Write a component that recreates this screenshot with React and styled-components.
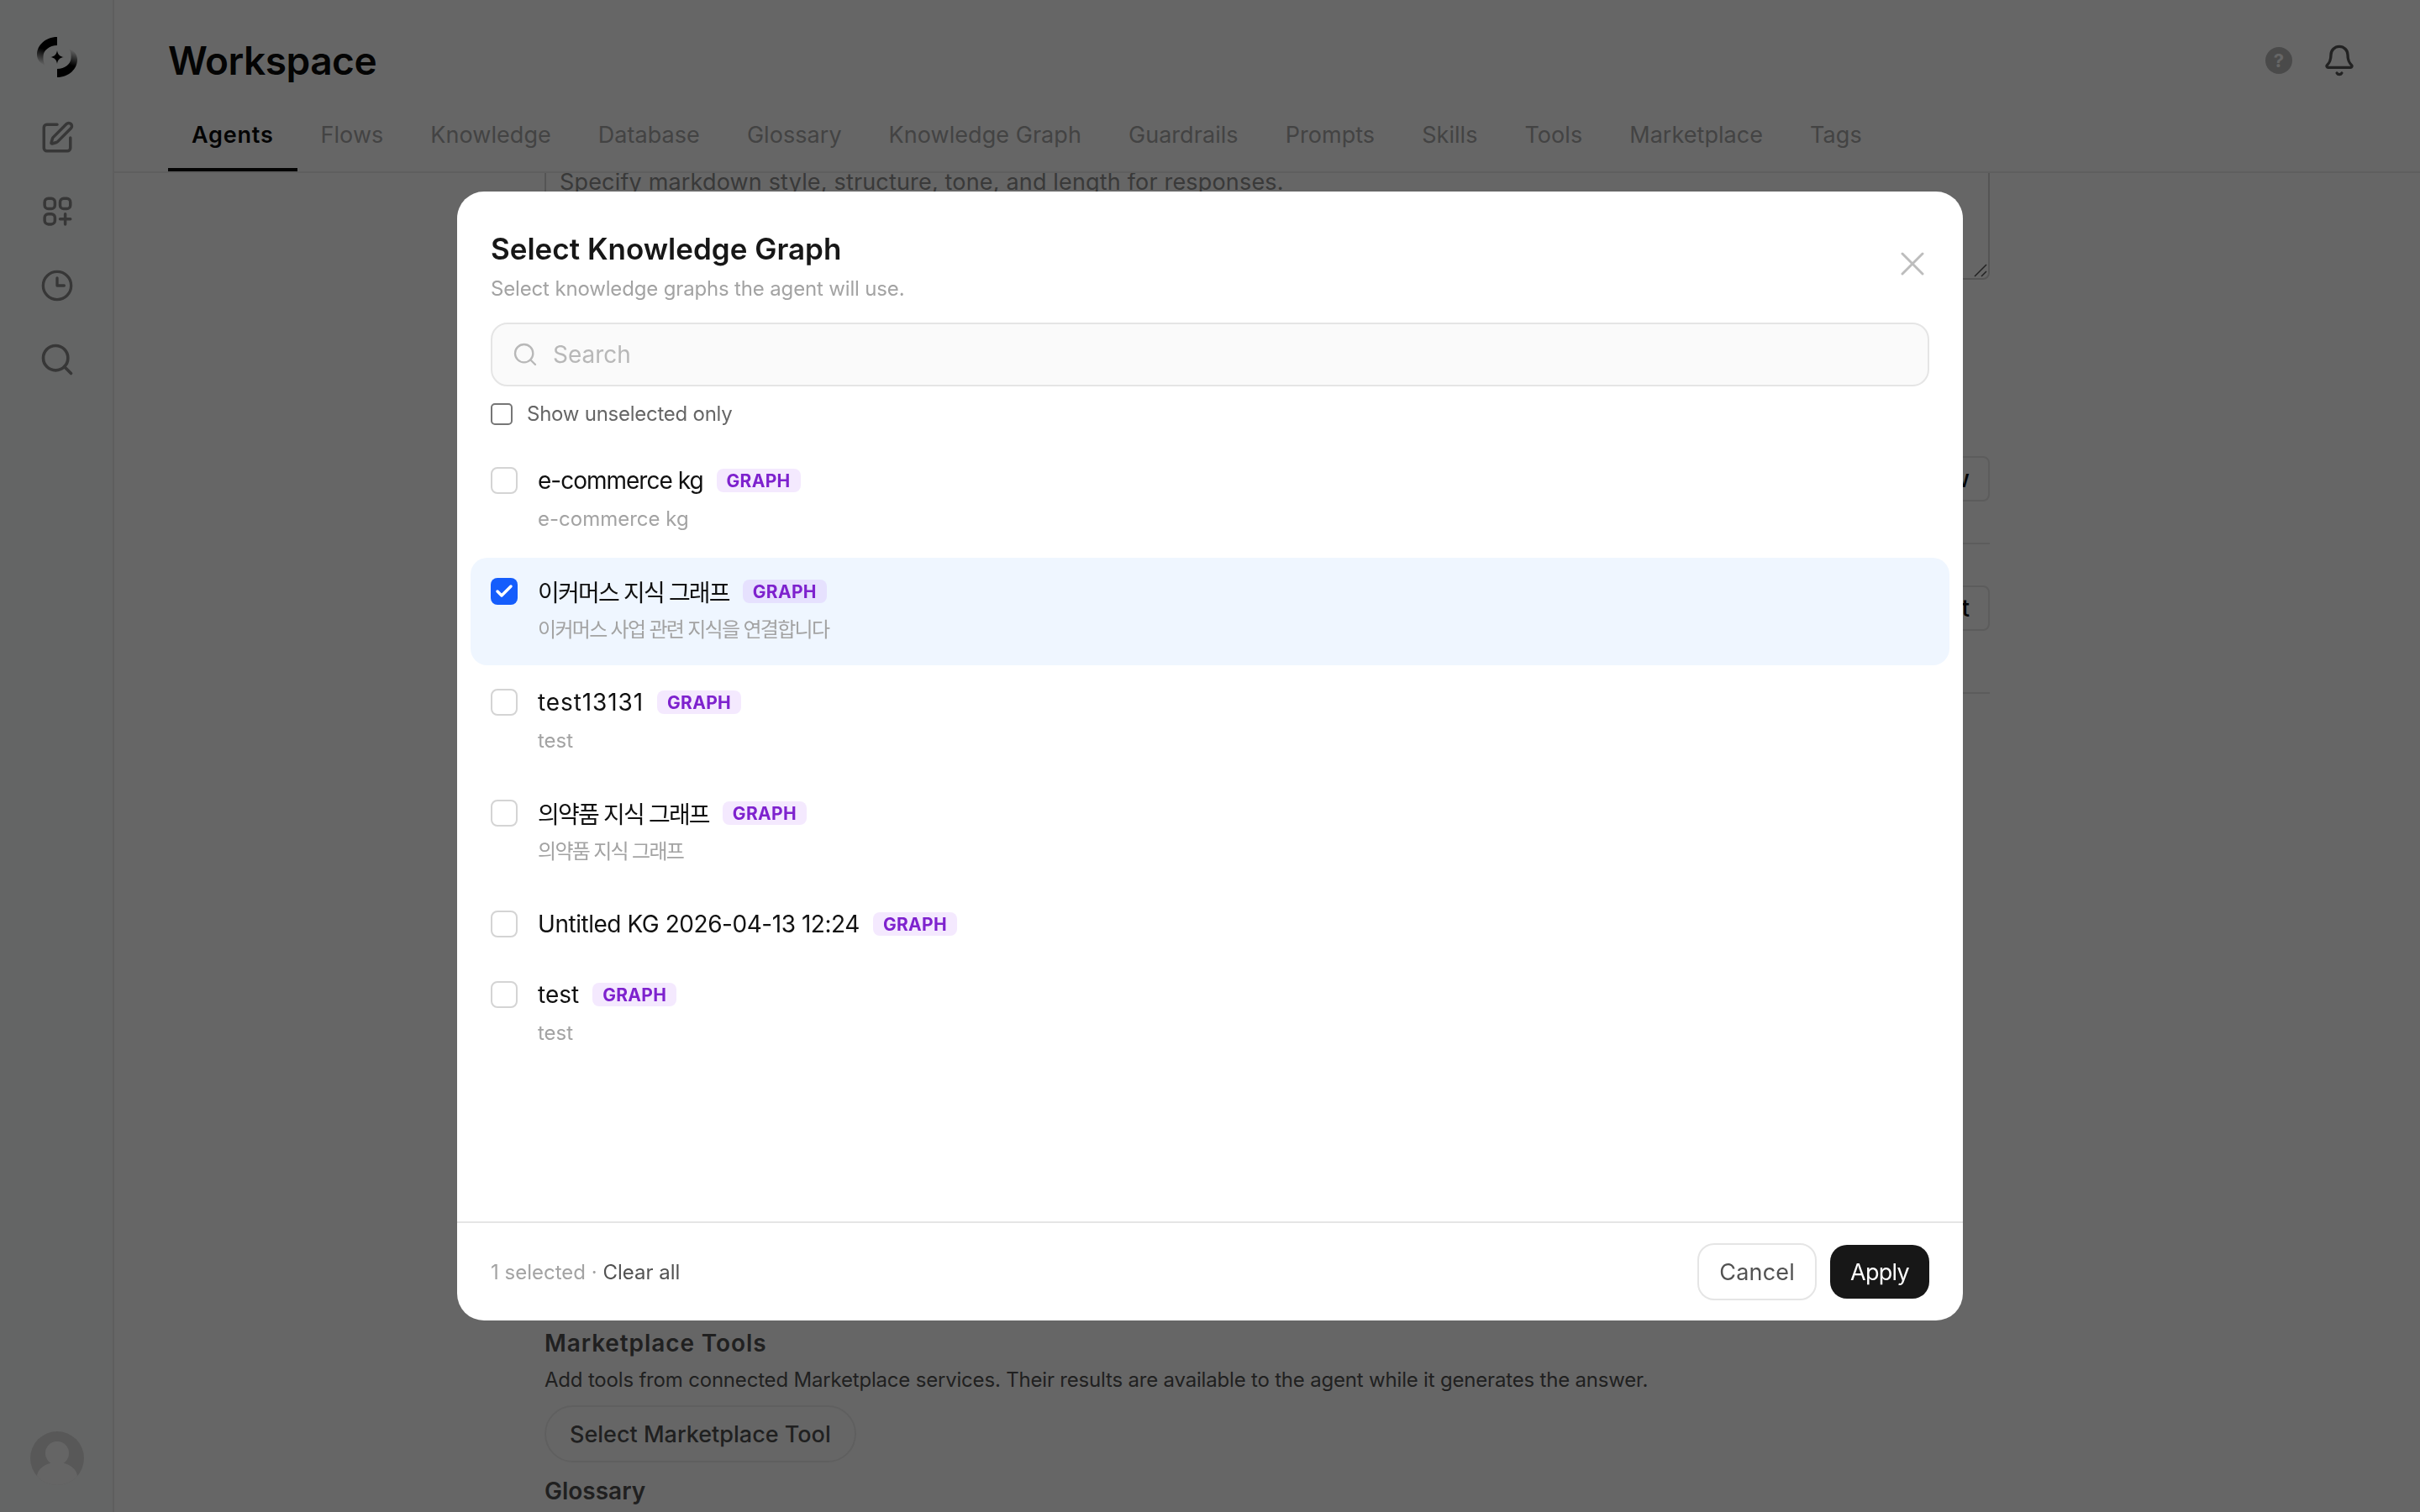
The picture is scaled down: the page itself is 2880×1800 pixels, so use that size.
import { createGlobalStyle, styled } from "styled-components";
import { Bell, Check, Search, SquarePen, X } from "lucide-react";

const GlobalStyle = createGlobalStyle`
  html, body {
    margin: 0;
    height: 100%;
    overflow: hidden;
    background: #fff;
  }
  body {
    font-family: Inter, "Noto Sans CJK KR", sans-serif;
    color: #0a0a0a;
  }
  * { box-sizing: border-box; }
`;

const tabs = ["Agents", "Flows", "Knowledge", "Database", "Glossary", "Knowledge Graph", "Guardrails", "Prompts", "Skills", "Tools", "Marketplace", "Tags"];

const graphs = [
  { name: "e-commerce kg", desc: "e-commerce kg", track: -1 },
  { name: "이커머스 지식 그래프", desc: "이커머스 사업 관련 지식을 연결합니다", selected: true, track: -1.8, descTrack: -1.7 },
  { name: "test13131", desc: "test", track: 0.9 },
  { name: "의약품 지식 그래프", desc: "의약품 지식 그래프", track: -1.8, descTrack: -1.7 },
  { name: "Untitled KG 2026-04-13 12:24", track: -0.46 },
  { name: "test", desc: "test" },
];

const Shell = styled.div`
  display: flex;
  height: 100vh;
`;
const Sidebar = styled.aside`
  width: 136px;
  flex-shrink: 0;
  display: flex;
  flex-direction: column;
  align-items: center;
  padding: 44px 0 32px 2px;
  background: #fbfdfd;
  border-right: 2px solid #ececec;
`;
const LogoMark = styled.svg`
  width: 48px;
  height: 48px;
  margin-bottom: 28px;
`;
const NavIcon = styled.div`
  width: 88px;
  height: 88px;
  display: flex;
  align-items: center;
  justify-content: center;
  color: #8a8a8a;
`;
const Avatar = styled.svg`
  width: 64px;
  height: 64px;
  margin-top: auto;
`;
const Main = styled.main`
  flex: 1;
  min-width: 0;
  display: flex;
  flex-direction: column;
`;
const Header = styled.header`
  border-bottom: 2px solid #ececec;
  flex-shrink: 0;
`;
const TopBar = styled.div`
  height: 116px;
  padding: 28px 76px 0 64px;
  display: flex;
  align-items: center;
  justify-content: space-between;
`;
const PageTitle = styled.h1`
  margin: 0;
  font-size: 46px;
  font-weight: 600;
  letter-spacing: -0.5px;
`;
const TopActions = styled.div`
  display: flex;
  align-items: center;
  gap: 36px;
  color: #555;
`;
const HelpDot = styled.span`
  width: 32px;
  height: 32px;
  border-radius: 50%;
  background: #b9b9b9;
  color: #fff;
  font-size: 22px;
  font-weight: 700;
  display: flex;
  align-items: center;
  justify-content: center;
`;
const TabBar = styled.nav`
  display: flex;
  padding-left: 64px;
`;
const Tab = styled.div`
  height: 88px;
  padding: 0 28px;
  display: flex;
  align-items: center;
  font-size: 27px;
  font-weight: ${(p) => (p.$active ? 600 : 400)};
  letter-spacing: ${(p) => (p.$active ? "0.8px" : "0.05px")};
  color: ${(p) => (p.$active ? "#0a0a0a" : "#a8a8a8")};
  box-shadow: ${(p) => (p.$active ? "inset 0 -4px 0 #0a0a0a" : "none")};
`;
const Scroller = styled.div`
  flex: 1;
  min-height: 0;
  overflow: hidden;
`;
const Column = styled.div`
  width: 1720px;
  margin: -27px auto 0;
`;
const PromptWrap = styled.div`
  position: relative;
`;
const Prompt = styled.textarea`
  display: block;
  width: 100%;
  height: 154px;
  padding: 16px;
  font: 400 27px/40px Inter, sans-serif;
  letter-spacing: 0.17px;
  color: #8f8f8f;
  background: #fff;
  border: 2px solid #d4d4d4;
  border-radius: 8px;
  outline: none;
  resize: none;
`;
const Grip = styled.svg`
  position: absolute;
  right: 3px;
  bottom: 3px;
  width: 16px;
  height: 16px;
`;
const ActionRow = styled.div`
  display: flex;
  justify-content: flex-end;
  padding: ${(p) => (p.$tall ? "49px 0 73px" : "48px 0 49px")};
  border-bottom: 2px solid #e5e5e5;
  &:nth-of-type(2) {
    margin-top: 162px;
  }
`;
const RowButton = styled.div`
  height: 54px;
  padding: 0 22px;
  display: flex;
  align-items: center;
  font-size: 28px;
  font-weight: 500;
  border: 2px solid #e5e5e5;
  border-radius: 8px;
`;
const SectionTitle = styled.h3`
  margin: ${(p) => (p.$first ? "753px" : "14px")} 0 0;
  font-size: 28px;
  line-height: 40px;
  font-weight: 600;
  letter-spacing: ${(p) => (p.$first ? "0.9px" : "0")};
  color: #525252;
`;
const SectionText = styled.p`
  margin: 6px 0 0;
  font-size: 24px;
  line-height: 36px;
  letter-spacing: -0.19px;
  color: #525252;
`;
const GhostButton = styled.div`
  display: inline-flex;
  align-items: center;
  height: 68px;
  margin-top: 12px;
  padding: 0 28px;
  border: 2px solid #eeeeee;
  border-radius: 34px;
  font-size: 27px;
  font-weight: 500;
  color: #525252;
`;
const Overlay = styled.div`
  position: fixed;
  inset: 0;
  display: flex;
  align-items: center;
  justify-content: center;
  background: rgba(0, 0, 0, 0.6);
`;
const Modal = styled.div`
  width: 1792px;
  height: 1344px;
  display: flex;
  flex-direction: column;
  background: #fff;
  border-radius: 32px;
  overflow: hidden;
`;
const ModalBody = styled.div`
  flex: 1;
  min-height: 0;
  padding: 44px 40px 0;
  display: flex;
  flex-direction: column;
`;
const ModalHead = styled.div`
  display: flex;
  align-items: center;
  justify-content: space-between;
  margin-bottom: 22px;
`;
const ModalTitle = styled.h2`
  margin: 0;
  font-size: 35px;
  line-height: 48px;
  font-weight: 600;
  color: #171717;
`;
const ModalSub = styled.p`
  margin: 6px 0 0;
  font-size: 24px;
  line-height: 36px;
  letter-spacing: -0.16px;
  color: #a3a3a3;
`;
const CloseBtn = styled.div`
  width: 48px;
  height: 48px;
  margin: 0 -4px 6px 0;
  color: #bdbdbd;
`;
const SearchBox = styled.div`
  height: 76px;
  flex-shrink: 0;
  padding: 0 23px;
  display: flex;
  align-items: center;
  gap: 17px;
  background: #fafafa;
  border: 2px solid #e5e5e5;
  border-radius: 20px;
  color: #b8b8b8;
  font-size: 28px;
`;
const FilterRow = styled.label`
  display: flex;
  align-items: center;
  gap: 17px;
  height: 26px;
  margin-top: 19px;
  margin-bottom: 1px;
  font-size: 24px;
  letter-spacing: -0.25px;
  color: #666;
`;
const NativeBox = styled.span`
  width: 26px;
  height: 26px;
  margin-top: 2px;
  border: 2px solid #767676;
  border-radius: 5px;
`;
const List = styled.div`
  flex: 1;
  margin: 26px -24px 0;
  display: flex;
  flex-direction: column;
  gap: 4px;
`;
const Item = styled.div`
  display: flex;
  gap: 24px;
  padding: 24px;
  border-radius: 20px;
  background: ${(p) => (p.$selected ? "#eff6ff" : "transparent")};
`;
const Tick = styled.span`
  width: 32px;
  height: 32px;
  flex-shrink: 0;
  display: flex;
  align-items: center;
  justify-content: center;
  border-radius: 8px;
  color: #fff;
  background: ${(p) => (p.$on ? "#155dfc" : "#fff")};
  border: ${(p) => (p.$on ? "none" : "2px solid #d4d4d4")};
`;
const ItemName = styled.div`
  display: flex;
  align-items: center;
  gap: 16px;
  height: 32px;
  font-size: 28px;
  color: #111;
`;
const NameText = styled.span`
  letter-spacing: ${(p) => p.$track || 0}px;
`;
const Badge = styled.span`
  height: 28px;
  padding: 0 12px;
  display: flex;
  align-items: center;
  border-radius: 8px;
  background: rgba(168, 85, 247, 0.13);
  color: #7e22ce;
  font-size: 21px;
  font-weight: 700;
  letter-spacing: 0.3px;
`;
const ItemDesc = styled.div`
  margin-top: 11px;
  font-size: 24px;
  line-height: 37px;
  letter-spacing: ${(p) => p.$track || 0}px;
  color: #a3a3a3;
`;
const Footer = styled.div`
  height: 118px;
  flex-shrink: 0;
  padding: 0 40px;
  display: flex;
  align-items: center;
  justify-content: space-between;
  border-top: 2px solid #e5e5e5;
`;
const Count = styled.div`
  font-size: 24px;
  color: #a3a3a3;
`;
const ClearAll = styled.span`
  color: #525252;
`;
const FooterActions = styled.div`
  display: flex;
  align-items: center;
  gap: 16px;
`;
const FooterButton = styled.div`
  display: flex;
  align-items: center;
  padding: 0 ${(p) => (p.$primary ? "24px" : "24px")};
  height: ${(p) => (p.$primary ? "64px" : "68px")};
  font-size: 27px;
  letter-spacing: ${(p) => (p.$primary ? "-0.7px" : "0.2px")};
  border-radius: 20px;
  color: ${(p) => (p.$primary ? "#fff" : "#525252")};
  background: ${(p) => (p.$primary ? "#171717" : "#fff")};
  border: ${(p) => (p.$primary ? "none" : "2px solid #e5e5e5")};
`;

const Logo = () => (
  <LogoMark viewBox="0 0 48 48">
    <defs>
      <linearGradient id="arc" gradientUnits="userSpaceOnUse" x1="16" y1="10" x2="9" y2="34">
        <stop offset="0.25" stopColor="#000" />
        <stop offset="1" stopColor="#000" stopOpacity="0" />
      </linearGradient>
    </defs>
    <path d="M24 0C10 0 0 10 0 21c0 6 4 11 10 13-3-4-2.500-8-2.500-11C7.500 16 15 10 24 10Z" fill="url(#arc)" />
    <path d="M24 0C10 0 0 10 0 21c0 6 4 11 10 13-3-4-2.500-8-2.500-11C7.500 16 15 10 24 10Z" fill="url(#arc)" transform="rotate(180 24 24)" />
    <path d="M24 16c.8 5 3 7.200 8 8-5 .8-7.200 3-8 8-.8-5-3-7.200-8-8 5-.8 7.200-3 8-8Z" fill="#000" />
  </LogoMark>
);

const AppsIcon = () => (
  <svg width="42" height="42" viewBox="0 0 24 24" fill="none" stroke="currentColor" strokeWidth="2" strokeLinecap="round">
    <rect x="3.500" y="3" width="7" height="7" rx="2.500" />
    <rect x="14" y="3" width="7" height="7" rx="2.500" />
    <rect x="3.500" y="13.500" width="7" height="7" rx="2.500" />
    <path d="M17.500 13.500v7M14 17h7" />
  </svg>
);

const ClockIcon = () => (
  <svg width="40" height="40" viewBox="0 0 24 24" fill="none" stroke="currentColor" strokeWidth="2" strokeLinecap="round" strokeLinejoin="round">
    <circle cx="12" cy="12" r="10" />
    <path d="M12 6.500V12h5" />
  </svg>
);

const App = () => {
  return (
    <>
      <GlobalStyle />
      <Shell>
        <Sidebar>
          <Logo />
          <NavIcon><SquarePen size={42} strokeWidth={2} /></NavIcon>
          <NavIcon><AppsIcon /></NavIcon>
          <NavIcon><ClockIcon /></NavIcon>
          <NavIcon><Search size={44} strokeWidth={2} /></NavIcon>
          <Avatar viewBox="0 0 64 64">
            <clipPath id="avatarClip"><circle cx="32" cy="32" r="32" /></clipPath>
            <g clipPath="url(#avatarClip)">
              <rect width="64" height="64" fill="#dcdcdc" />
              <circle cx="32" cy="26" r="14" fill="#fdfdfd" />
              <ellipse cx="32" cy="54" rx="24" ry="17" fill="#fdfdfd" />
            </g>
          </Avatar>
        </Sidebar>
        <Main>
          <Header>
            <TopBar>
              <PageTitle>Workspace</PageTitle>
              <TopActions>
                <HelpDot>?</HelpDot>
                <Bell size={40} strokeWidth={2} />
              </TopActions>
            </TopBar>
            <TabBar>
              {tabs.map((t, i) => (
                <Tab key={t} $active={i === 0}>{t}</Tab>
              ))}
            </TabBar>
          </Header>
          <Scroller>
            <Column>
              <PromptWrap>
                <Prompt readOnly defaultValue="Specify markdown style, structure, tone, and length for responses." />
                <Grip viewBox="0 0 16 16" stroke="#555" strokeWidth="1.500">
                  <path d="M1 15 15 1M9 15l6-6" />
                </Grip>
              </PromptWrap>
              <ActionRow><RowButton>New</RowButton></ActionRow>
              <ActionRow $tall><RowButton>Select</RowButton></ActionRow>
              <SectionTitle $first>Marketplace Tools</SectionTitle>
              <SectionText>Add tools from connected Marketplace services. Their results are available to the agent while it generates the answer.</SectionText>
              <GhostButton>Select Marketplace Tool</GhostButton>
              <SectionTitle>Glossary</SectionTitle>
            </Column>
          </Scroller>
        </Main>
      </Shell>
      <Overlay>
        <Modal>
          <ModalBody>
            <ModalHead>
              <div>
                <ModalTitle>Select Knowledge Graph</ModalTitle>
                <ModalSub>Select knowledge graphs the agent will use.</ModalSub>
              </div>
              <CloseBtn><X size={48} strokeWidth={1.500} /></CloseBtn>
            </ModalHead>
            <SearchBox>
              <Search size={32} strokeWidth={1.750} />
              Search
            </SearchBox>
            <FilterRow>
              <NativeBox />
              Show unselected only
            </FilterRow>
            <List>
              {graphs.map((g) => (
                <Item key={g.name} $selected={g.selected}>
                  <Tick $on={g.selected}>
                    {g.selected && <Check size={24} strokeWidth={3.500} />}
                  </Tick>
                  <div>
                    <ItemName>
                      <NameText $track={g.track}>{g.name}</NameText>
                      <Badge>GRAPH</Badge>
                    </ItemName>
                    {g.desc && <ItemDesc $track={g.descTrack}>{g.desc}</ItemDesc>}
                  </div>
                </Item>
              ))}
            </List>
          </ModalBody>
          <Footer>
            <Count>1 selected · <ClearAll>Clear all</ClearAll></Count>
            <FooterActions>
              <FooterButton>Cancel</FooterButton>
              <FooterButton $primary>Apply</FooterButton>
            </FooterActions>
          </Footer>
        </Modal>
      </Overlay>
    </>
  );
};

export default App;
